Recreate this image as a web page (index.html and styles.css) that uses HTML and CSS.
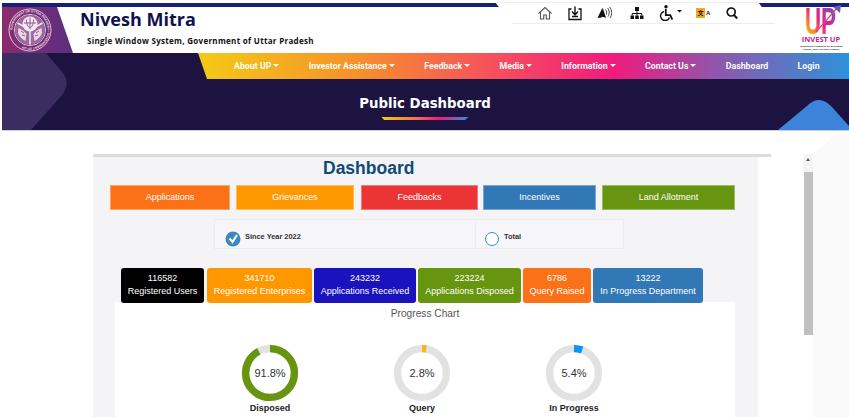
FILE: index.html
```html
<!DOCTYPE html>
<html lang="en">
<head>
<meta charset="utf-8">
<title>Public Dashboard</title>
<link rel="stylesheet" href="styles.css">
</head>
<body>
<div class="page">
  <header class="site-header">
    <div class="brand-mark">
      <svg class="emblem" viewBox="0 0 44 44" width="44" height="44">
        <defs><path id="ring" d="M22 22 m-17.6 0 a17.6 17.6 0 1 1 35.2 0 a17.6 17.6 0 1 1 -35.2 0"/></defs>
        <circle cx="22" cy="22" r="21" fill="none" stroke="#e6d3e4" stroke-width="0.9"/>
        <circle cx="22" cy="22" r="15.6" fill="none" stroke="#e6d3e4" stroke-width="0.9"/>
        <text class="emblem-text"><textPath href="#ring">GOVERNMENT OF UTTAR PRADESH • GOVERNMENT OF UP</textPath></text>
        <circle cx="22" cy="22" r="15" fill="#9c6a9c"/>
        <circle cx="22" cy="16" r="7.6" fill="#f4e9f2"/>
        <path d="M22 9.5v12M18.5 11.5c0 5 1.5 7.5 3.5 8.5 2-1 3.500-3.500 3.500-8.500M16 15h12" stroke="#8a4c8a" stroke-width="0.9" fill="none"/>
        <path d="M22 22v14.500M22 22l-12.500-7M22 22l12.500-7" stroke="#f4e9f2" stroke-width="1.500" fill="none"/>
        <path d="M10.500 20c3 1 6 3 8 6l-1 7c-3-1.500-6-4-7.500-8zM33.500 20c-3 1-6 3-8 6l1 7c3-1.500 6-4 7.500-8z" fill="#e9d7e6"/>
        <path d="M13 23l3 2M14 27l3 1M31 23l-3 2M30 27l-3 1" stroke="#7c3f7c" stroke-width="0.8"/>
      </svg>
    </div>
    <div class="brand-text">
      <h1 class="brand-title">Nivesh Mitra</h1>
      <p class="brand-sub">Single Window System, Government of Uttar Pradesh</p>
    </div>
    <svg class="invest-logo" viewBox="0 -6 49 52" width="49" height="52">
      <defs>
        <linearGradient id="upfill" x1="0" y1="1" x2="1" y2="0">
          <stop offset="0.2" stop-color="#f7a21b"/>
          <stop offset="0.5" stop-color="#ec1c8c"/>
          <stop offset="0.9" stop-color="#7a4fb5"/>
        </linearGradient>
      </defs>
      <text class="logo-up" x="8" y="29" transform="scale(0.62 1)" fill="url(#upfill)">UP</text>
      <path d="M16 27L37 3" stroke="#e0457e" stroke-width="1.200"/>
      <path d="M33 2l8-2-1 8z" fill="#6d5ab5"/>
      <text class="logo-invest" x="21" y="37" text-anchor="middle">INVEST UP</text>
      <text class="logo-small" x="21" y="41.500" text-anchor="middle">Investment Promotion &amp; Facilitation</text>
      <text class="logo-small" x="21" y="44.500" text-anchor="middle">Agency, Govt. of Uttar Pradesh</text>
    </svg>
    <div class="tool-strip">
      <svg class="ti w16" viewBox="0 0 16 16"><path d="M1.500 8.500L8 2.500l6.500 6M3.500 7.500v6.500h3.200v-4h2.600v4h3.200V7.500" fill="none" stroke="#555" stroke-width="1.100"/></svg>
      <svg class="ti w16" viewBox="0 0 16 16"><path d="M4.500 4H2v10.500h12V4h-2.500" fill="none" stroke="#111" stroke-width="1.300"/><path d="M8 1.500v7.500M5 6.500l3 3.500 3-3.500" fill="none" stroke="#111" stroke-width="1.400"/><path d="M5 11.500h6" stroke="#111" stroke-width="1.300"/></svg>
      <svg class="ti w15" viewBox="0 0 15 16"><path d="M5.500 2.500L.5 13l4-.5 2-1.500z" fill="#111"/><path d="M6 3.500l3 9.500-4-1.500z" fill="#111"/><path d="M8.500 4.500c1.300 1.300 1.300 3.500 1 5M10.500 3c2.200 2.200 2.200 6 .5 8.500M12.500 2c2.800 2.800 2.800 8 .5 11" fill="none" stroke="#444" stroke-width="1"/></svg>
      <svg class="ti w14 push" viewBox="0 0 14 16"><path d="M5 2h4v4H5zM0.500 10.500h3.500V14H.5zM5.200 10.500h3.600V14H5.200zM10 10.500h3.500V14H10z" fill="#111"/><path d="M7 6v2.500M2.200 10.500V8.500h9.600v2M7 8.500v2" fill="none" stroke="#111" stroke-width="1"/></svg>
      <svg class="ti w24" viewBox="0 0 24 16"><circle cx="8" cy="1.800" r="1.700" fill="#111"/><path d="M7.800 4v6.200h4.500l2 4.500" fill="none" stroke="#111" stroke-width="1.800"/><path d="M6 6.500a4.600 4.600 0 1 0 5.500 6" fill="none" stroke="#111" stroke-width="1.400"/><path d="M19 5h5l-2.500 2.500z" fill="#111"/></svg>
      <span class="translate"><span class="tr-box">文</span><span class="tr-a">A</span></span>
      <svg class="ti w12" viewBox="0 0 12 14"><circle cx="5.200" cy="6" r="4" fill="none" stroke="#111" stroke-width="1.700"/><path d="M8 9l3.200 3.500" stroke="#111" stroke-width="1.900"/></svg>
    </div>
  </header>

  <section class="banner">
    <div class="shape-left"></div>
    <div class="shape-right"></div>
    <nav class="main-nav">
      <a class="nav-item caret">About UP</a>
      <a class="nav-item caret">Investor Assistance</a>
      <a class="nav-item caret">Feedback</a>
      <a class="nav-item caret">Media</a>
      <a class="nav-item caret">Information</a>
      <a class="nav-item caret">Contact Us</a>
      <a class="nav-item">Dashboard</a>
      <a class="nav-item">Login</a>
    </nav>
    <div class="banner-title">
      <h2>Public Dashboard</h2>
      <div class="title-rule"></div>
    </div>
  </section>

  <main class="content">
    <div class="panel-wrap">
      <div class="panel">
        <h3 class="panel-title">Dashboard</h3>
        <div class="tabs">
          <a class="tab t-app">Applications</a>
          <a class="tab t-gri">Grievances</a>
          <a class="tab t-fee">Feedbacks</a>
          <a class="tab t-inc">Incentives</a>
          <a class="tab t-lan">Land Allotment</a>
        </div>
        <div class="filter">
          <label class="filter-cell first">
            <svg class="check" viewBox="0 0 16 16" width="16" height="16"><circle cx="8" cy="8" r="7.500" fill="#3a8abf"/><path d="M4.500 7.500l3 3.500 4.500-7" fill="none" stroke="#fff" stroke-width="2.200"/></svg>
            <span>Since Year 2022</span>
          </label>
          <label class="filter-cell second">
            <span class="radio"></span>
            <span>Total</span>
          </label>
        </div>
        <div class="stats">
          <div class="stat s-black w83"><b>116582</b><span>Registered Users</span></div>
          <div class="stat s-orange w105"><b>341710</b><span>Registered Enterprises</span></div>
          <div class="stat s-blue w102"><b>243232</b><span>Applications Received</span></div>
          <div class="stat s-green w103"><b>223224</b><span>Applications Disposed</span></div>
          <div class="stat s-deep w68"><b>6786</b><span>Query Raised</span></div>
          <div class="stat s-steel w110"><b>13222</b><span>In Progress Department</span></div>
        </div>
        <div class="chart-card">
          <p class="chart-title">Progress Chart</p>
          <div class="donuts">
            <figure class="donut">
              <div class="ring">
                <svg viewBox="0 0 58 58" width="58" height="58"><circle class="track" cx="29" cy="29" r="24.400"/><circle class="arc" cx="29" cy="29" r="24.400" stroke="#67950f" stroke-dasharray="140.700 153.300"/></svg>
                <span class="pct">91.8%</span>
              </div>
              <figcaption>Disposed</figcaption>
            </figure>
            <figure class="donut">
              <div class="ring">
                <svg viewBox="0 0 58 58" width="58" height="58"><circle class="track" cx="29" cy="29" r="24.400"/><circle class="arc" cx="29" cy="29" r="24.400" stroke="#fdb514" stroke-dasharray="4.300 153.300"/></svg>
                <span class="pct">2.8%</span>
              </div>
              <figcaption>Query</figcaption>
            </figure>
            <figure class="donut">
              <div class="ring">
                <svg viewBox="0 0 58 58" width="58" height="58"><circle class="track" cx="29" cy="29" r="24.400"/><circle class="arc" cx="29" cy="29" r="24.400" stroke="#0f93f5" stroke-dasharray="8.300 153.300"/></svg>
                <span class="pct">5.4%</span>
              </div>
              <figcaption>In Progress</figcaption>
            </figure>
          </div>
        </div>
      </div>
    </div>
    <aside class="side">
      <div class="scrollbar">
        <div class="scroll-btn"></div>
        <div class="scroll-thumb"></div>
      </div>
    </aside>
  </main>
</div>
</body>
</html>
```

FILE: styles.css
```css
* { box-sizing: border-box; }
html, body { margin: 0; padding: 0; background: #fff; }
body { font-family: "Liberation Sans", Arial, sans-serif; overflow: hidden; }
h1, h2, h3, p, figure { margin: 0; }

.page { width: 849px; height: 417px; overflow: hidden; padding: 3px 0 0 2px; }

/* Header */
.site-header {
  position: relative;
  display: flex;
  height: 50px;
  border-top: 4px solid #1b1f7c;
  background: #fff;
}
.brand-mark {
  width: 71px;
  height: 46px;
  flex: none;
  padding: 0 0 0 6px;
  background: linear-gradient(90deg, #8b2c6e 0%, #5c2d80 100%);
  clip-path: polygon(0 0, 55px 0, 71px 46px, 0 46px);
}
.emblem { display: block; margin-top: 1px; }
.emblem-text { font: 700 3.100px "Liberation Sans", sans-serif; fill: #f0e4ee; }
.brand-text { padding: 2px 0 0 7px; }
.brand-title {
  font: 700 18px/20px "Open Sans", sans-serif;
  color: #10104f;
}
.brand-sub {
  margin: 6px 0 0 7px;
  font: 700 8px/11px "Open Sans", sans-serif;
  color: #111;
  letter-spacing: 0.3px;
  white-space: nowrap;
}
.invest-logo { position: absolute; right: 0; top: -8px; }
.logo-up { font: 700 36px "Liberation Sans", sans-serif; }
.logo-invest { font: 700 7.500px "Open Sans", sans-serif; fill: #c2278f; }
.logo-small { font: 700 2.400px "Open Sans", sans-serif; fill: #333; }

.tool-strip {
  position: absolute;
  left: 493px;
  top: -5px;
  width: 280px;
  height: 22px;
  display: flex;
  align-items: center;
  gap: 14px;
  padding: 0 0 1px 42px;
  background: linear-gradient(#fff 20px, #ececec 20px);
  border-top: 1px solid #eee;
  clip-path: polygon(0 0, 263px 0, 280px 100%, 17px 100%);
}
.ti { display: block; height: 16px; flex: none; }
.w12 { width: 12px; }
.w14 { width: 14px; }
.w15 { width: 15px; }
.w16 { width: 16px; }
.w24 { width: 24px; }
.push { margin-left: 4px; }
.translate { display: flex; align-items: center; width: 16px; flex: none; }
.tr-box {
  width: 9px; height: 10px;
  background: #f5a623;
  font: 700 6px/10px "Noto Sans CJK SC", sans-serif;
  text-align: center;
  color: #111;
}
.tr-a { font: 700 6px/10px "Liberation Sans", sans-serif; color: #222; padding-left: 1px; }

/* Banner */
.banner {
  position: relative;
  height: 78px;
  background: #1d1340;
  border-bottom: 1px solid #cfcde0;
  overflow: hidden;
}
.shape-left {
  position: absolute;
  left: 0;
  top: 0;
  width: 70px;
  height: 78px;
  background: #3b2d60;
  clip-path: path("M0 0H44L60 19C66 26 66 33 61 41L28 78H0Z");
}
.shape-right {
  position: absolute;
  right: 0;
  bottom: 0;
  width: 71px;
  height: 30px;
  background: #3b84da;
  clip-path: path("M0 30L29 6C34 1 38 0 41 0C45 0 49 2 53 6L71 26V30Z");
}
.main-nav {
  position: relative;
  margin-left: 196px;
  height: 26px;
  display: flex;
  align-items: center;
  gap: 29.300px;
  padding: 0 0 0 36px;
  background: linear-gradient(90deg, #f4ca17 0%, #f6922a 24%, #f6545a 44%, #ef1b7d 64%, #8d58ad 80%, #2e92d8 100%);
  clip-path: polygon(0 0, 100% 0, 100% 100%, 9px 100%);
}
.nav-item {
  font: 700 8.800px/12px "Roboto", sans-serif;
  color: #fff;
  white-space: nowrap;
  opacity: 0.96;
}
.caret::after {
  content: "";
  display: inline-block;
  margin-left: 2px;
  vertical-align: 2px;
  border-top: 3px solid #fff;
  border-left: 3px solid transparent;
  border-right: 3px solid transparent;
}
.banner-title {
  position: relative;
  display: flex;
  flex-direction: column;
  align-items: center;
  padding: 15px 0 0 0;
  margin-left: -1px;
}
.banner-title h2 {
  font: 700 13.300px/19px "DejaVu Sans", sans-serif;
  color: #fff;
}
.title-rule {
  width: 87px;
  height: 3px;
  margin-top: 4px;
  background: linear-gradient(90deg, #f4ca17, #f6704a 40%, #ef1b7d 65%, #2e92d8);
  clip-path: polygon(0 0, 100% 0, 96% 100%, 3% 100%);
}

/* Content */
.content {
  display: flex;
  height: 286px;
  padding: 23px 0 0 91px;
}
.panel-wrap {
  width: 678px;
  flex: none;
  border-top: 3px solid #dcdcdc;
}
.panel {
  width: 665px;
  height: 100%;
  background: #f4f4f7;
  padding: 1px 0 0 17px;
  overflow: hidden;
}
.panel-title {
  font: 700 17.500px/21px "Liberation Sans", sans-serif;
  color: #104a75;
  padding-left: 213px;
}
.tabs {
  display: flex;
  margin-top: 6px;
}
.tab {
  height: 25px;
  font-size: 9px;
  line-height: 23px;
  text-align: center;
  color: #fff;
  border: 1px solid rgba(255,255,255,.35);
}
.t-app { width: 120px; background: #fb7118; margin-right: 6px; }
.t-gri { width: 118px; background: #ff9800; margin-right: 7px; }
.t-fee { width: 117px; background: #eb3434; margin-right: 5px; }
.t-inc { width: 113px; background: #3278b7; margin-right: 6px; }
.t-lan { width: 133px; background: #67950f; }

.filter {
  display: flex;
  width: 410px;
  height: 30px;
  margin: 9px 0 0 104px;
  background: #f6f6f8;
  border: 1px solid #ececee;
}
.filter-cell {
  display: flex;
  align-items: flex-start;
  font-size: 7.400px;
  font-weight: 700;
  color: #333;
}
.filter-cell.first { width: 261px; padding: 11px 0 0 10px; gap: 4px; border-right: 1px solid #ececee; }
.filter-cell.second { padding: 11px 0 0 9px; gap: 5px; }
.filter-cell span { line-height: 11px; }
.radio {
  display: block;
  width: 14px; height: 14px;
  margin-top: 1px;
  border: 1.500px solid #3a8abf;
  border-radius: 50%;
  background: #fff;
}

.stats {
  display: flex;
  gap: 2px;
  margin: 19px 0 0 11px;
  position: relative;
}
.stat {
  height: 35px;
  border-radius: 3px;
  color: #fff;
  font-size: 9px;
  line-height: 13px;
  text-align: center;
  padding-top: 4px;
  display: flex;
  flex-direction: column;
  white-space: nowrap;
}
.stat b { font-weight: 400; }
.w83 { width: 83px; margin-right: 1px; }
.w105 { width: 105px; }
.w102 { width: 102px; }
.w103 { width: 103px; }
.w68 { width: 68px; }
.w110 { width: 110px; }
.s-black { background: #000; }
.s-orange { background: #ff9800; }
.s-blue { background: #1a12bd; }
.s-green { background: #67950f; }
.s-deep { background: #fb7118; }
.s-steel { background: #3278b7; }

.chart-card {
  width: 620px;
  height: 120px;
  margin: -1px 0 0 5px;
  background: #fff;
}
.chart-title {
  font-size: 10.200px;
  line-height: 14px;
  color: #555;
  text-align: center;
  padding-top: 5px;
}
.donuts {
  display: flex;
  justify-content: center;
  padding: 23px 6px 0 0;
}
.donut { width: 152px; display: flex; flex-direction: column; align-items: center; }
.ring { position: relative; width: 58px; height: 58px; }
.ring svg { display: block; }
.track { fill: none; stroke: #e2e2e2; stroke-width: 7.400px; }
.arc { fill: none; stroke-width: 7.400px; transform: rotate(-90deg); transform-origin: 29px 29px; }
.pct {
  position: absolute;
  inset: 0;
  font-size: 11px;
  line-height: 58px;
  text-align: center;
  color: #333;
}
figcaption {
  font-size: 9px;
  font-weight: 700;
  line-height: 11px;
  color: #222;
  margin-top: 1px;
}

/* Right side / scrollbar */
.side {
  margin-left: 32px;
  width: 46px;
  flex: none;
  position: relative;
}
.side::before {
  content: "";
  position: absolute;
  left: 10px;
  right: 0;
  top: -19px;
  height: 310px;
  background: #f9f9fa;
  clip-path: polygon(22px 0, 100% 0, 100% 100%, 0 100%, 0 19px);
}
.scrollbar { position: relative; width: 10px; }
.scroll-btn { height: 18px; background: #f4f4f4; position: relative; }
.scroll-btn::after {
  content: "";
  position: absolute;
  left: 3px; top: 4px;
  border-bottom: 3px solid #555;
  border-left: 2px solid transparent;
  border-right: 2px solid transparent;
}
.scroll-thumb { width: 9px; height: 163px; margin-left: 0.500px; background: #c0c0c0; }
```
